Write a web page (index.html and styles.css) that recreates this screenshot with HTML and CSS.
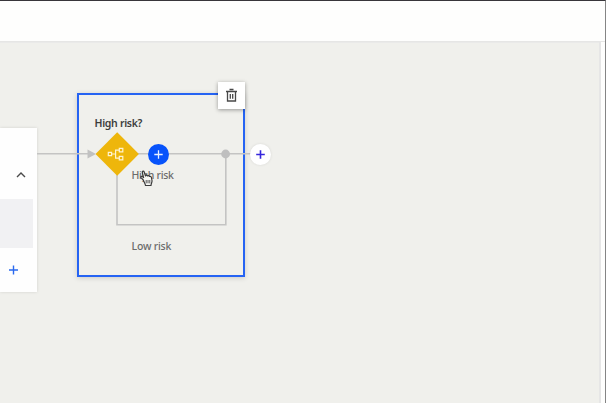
FILE: index.html
```html
<!DOCTYPE html>
<html lang="en">
<head>
<meta charset="utf-8">
<title>Workflow</title>
<link rel="stylesheet" href="styles.css">
</head>
<body>
<div class="app">
  <header class="topbar"></header>
  <div class="workspace">
    <main class="canvas">
      <section class="step-card">
        <div class="step-head">
          <svg width="10" height="6" viewBox="0 0 10 6"><path d="M1 5 5 1l4 4" fill="none" stroke="#4a4a4a" stroke-width="1.4"/></svg>
        </div>
        <div class="step-field"></div>
        <div class="step-foot">
          <svg width="10" height="10" viewBox="0 0 10 10"><path d="M5.500 .5v9M1 5h9" stroke="#2a69ee" stroke-width="1.4"/></svg>
        </div>
      </section>
      <div class="branch-group"></div>
      <svg class="wires" width="599" height="361" viewBox="0 42 599 361">
        <g fill="none" stroke="#c4c4c3" stroke-width="1.6">
          <path d="M37 153.8h52M137 153.8h115"/>
          <path d="M117 174v50.7h108.8V154"/>
        </g>
        <path d="M87.5 149.6v8.8L96 154z" fill="#c1c1c1"/>
        <circle cx="225.6" cy="154" r="4.4" fill="#bfbfbf"/>
        <path d="M117.2 132.3 138.9 154l-21.7 21.7L95.5 154z" fill="#eeb60b"/>
        <g fill="none" stroke="#fff4cf" stroke-width="1.2">
          <path d="M108.3 152.4h3.3v3.3h-3.3zM119.3 148.4h3.5v3.5h-3.5zM119.3 156.3h3.5v3.5h-3.5z"/>
          <path d="M111.6 154h4M119.3 150.1h-3.7v8h3.7"/>
        </g>
      </svg>
      <span class="label title">High risk?</span>
      <span class="label high">High risk</span>
      <span class="label low">Low risk</span>
      <button class="add add-inner" aria-label="Add step">
        <svg width="11" height="11" viewBox="0 0 11 11"><path d="M5.500 1.300v8.400M1.300 5.500h8.400" stroke="#e9f0ff" stroke-width="1.3"/></svg>
      </button>
      <button class="add add-outer" aria-label="Add step">
        <svg width="11" height="11" viewBox="0 0 11 11"><path d="M5.500 1.200v8.600M1.200 5.500h8.600" stroke="#3526dc" stroke-width="1.6"/></svg>
      </button>
      <button class="delete" aria-label="Delete">
        <svg width="13" height="15" viewBox="0 0 13 15"><g fill="none" stroke="#484848" stroke-width="1.3"><path d="M1 3.500h11M2.500 3.500v9.500h8V3.500M4.500 1.500h4"/><path d="M5.300 6v4.700M7.700 6v4.700"/></g></svg>
      </button>
      <svg class="pointer" width="14" height="17" viewBox="0 0 14 17">
        <path d="M3.3 10 1 7.7C.2 6.700 1.400 5.800 2.300 6.600L3.600 7.600 2.300 2.500C2 1 3.700.6 4.200 2L5.500 6C5.700 4.900 7.100 4.900 7.400 6 7.900 5.200 9.200 5.500 9.400 6.500 10.200 6 11.200 6.500 11.400 7.500L12 10.500C12.300 12.500 11 13.200 11 15.500H5.500C5.300 13.500 4 12 3.300 10z" fill="#f6f6f3" stroke="#3b3b3b" stroke-width="1.2" stroke-linejoin="round"/>
        <path d="M6.200 10v3.300M8 10v3.300M9.800 10v3.300" stroke="#444" stroke-width=".9"/>
      </svg>
    </main>
    <aside class="gutter"></aside>
  </div>
</div>
</body>
</html>
```
FILE: styles.css
```css
* { box-sizing: border-box; }
body { margin: 0; font-family: "Noto Sans", sans-serif; }
svg { display: block; }
button { border: 0; padding: 0; }

.app {
  width: 606px;
  height: 403px;
  display: flex;
  flex-direction: column;
  overflow: hidden;
  background: #fefefd;
  border-top: 1px solid #38363b;
  border-right: 1px solid #858585;
}
.topbar { height: 41px; border-bottom: 1px solid #e6e6e5; flex: none; }
.workspace { flex: 1; display: flex; }
.canvas {
  position: relative;
  flex: 1;
  background: #f0f0ec;
  overflow: hidden;
  box-shadow: inset 0 1px #eaeae9;
}
.gutter { width: 6px; border-left: 2px solid #e6e6e6; }

.step-card {
  display: flex;
  flex-direction: column;
  width: 37px;
  height: 164px;
  margin-top: 86px;
  background: #fefefe;
  box-shadow: 0 0 3px rgba(0, 0, 0, .13);
}
.step-head { height: 71px; padding: 44px 0 0 16px; }
.step-field { width: 33px; height: 49px; background: #f1f1f3; }
.step-foot { padding: 17px 0 0 8px; }

.branch-group {
  position: absolute;
  left: 77px;
  top: 51px;
  width: 168px;
  height: 184px;
  border: 2px solid #2563f3;
  box-shadow: 0 1px 5px rgba(0, 0, 0, .16);
}
.wires { position: absolute; left: 0; top: 0; }

.label {
  position: absolute;
  left: 131.500px;
  font-size: 10.500px;
  line-height: 14px;
  letter-spacing: -.3px;
  white-space: nowrap;
  color: #6b6b6b;
  font-weight: 500;
}
.title { left: 94.500px; top: 74px; color: #3d3d3d; font-weight: 600; }
.high { top: 126px; }
.low { top: 197px; letter-spacing: -.2px; }

.add {
  position: absolute;
  width: 21px;
  height: 21px;
  border-radius: 50%;
  display: grid;
  place-items: center;
}
.add-inner { left: 148px; top: 102px; background: #0753fb; }
.add-outer { left: 250px; top: 102px; background: #fff; box-shadow: 0 0 3px rgba(0, 0, 0, .1); }

.delete {
  position: absolute;
  left: 218px;
  top: 40px;
  width: 27px;
  height: 27px;
  display: grid;
  place-items: center;
  background: #fff;
  box-shadow: 0 1px 4px rgba(0, 0, 0, .38);
}
.pointer { position: absolute; left: 140px; top: 128px; }
```
